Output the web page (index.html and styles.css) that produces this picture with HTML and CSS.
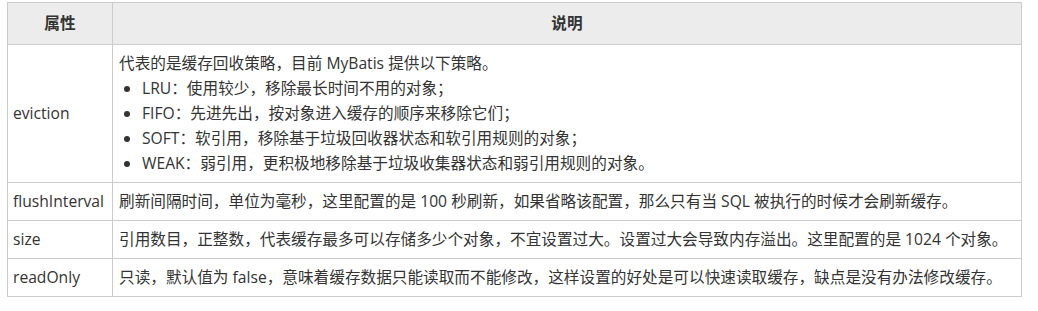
FILE: index.html
```html
<!DOCTYPE html>
<html lang="zh-CN">
<head>
<meta charset="utf-8">
<title>cache</title>
<link rel="stylesheet" href="styles.css">
</head>
<body>
<div class="wrap">
<table class="attr-table">
  <colgroup>
    <col class="col-name">
    <col class="col-desc">
  </colgroup>
  <thead>
    <tr><th>属性</th><th>说明</th></tr>
  </thead>
  <tbody>
    <tr>
      <td class="name">eviction</td>
      <td>
        <div>代表的是缓存回收策略，目前 MyBatis 提供以下策略。</div>
        <ul class="list">
          <li>LRU：使用较少，移除最长时间不用的对象；</li>
          <li>FIFO：先进先出，按对象进入缓存的顺序来移除它们；</li>
          <li>SOFT：软引用，移除基于垃圾回收器状态和软引用规则的对象；</li>
          <li>WEAK：弱引用，更积极地移除基于垃圾收集器状态和弱引用规则的对象。</li>
        </ul>
      </td>
    </tr>
    <tr>
      <td class="name">flushInterval</td>
      <td>刷新间隔时间，单位为毫秒，这里配置的是 100 秒刷新，如果省略该配置，那么只有当 SQL 被执行的时候才会刷新缓存。</td>
    </tr>
    <tr>
      <td class="name">size</td>
      <td>引用数目，正整数，代表缓存最多可以存储多少个对象，不宜设置过大。设置过大会导致内存溢出。这里配置的是 1024 个对象。</td>
    </tr>
    <tr>
      <td class="name">readOnly</td>
      <td>只读，默认值为 false，意味着缓存数据只能读取而不能修改，这样设置的好处是可以快速读取缓存，缺点是没有办法修改缓存。</td>
    </tr>
  </tbody>
</table>
</div>
</body>
</html>
```

FILE: styles.css
```css
html, body {
  margin: 0;
  padding: 0;
  background: #fff;
}
.wrap {
  padding: 2px 0 0 7px;
}
.attr-table {
  border-collapse: collapse;
  table-layout: fixed;
  width: 1015px;
  font-family: "Open Sans", "Noto Sans CJK SC", sans-serif;
  font-size: 15.65px;
  line-height: 25px;
  color: #333;
}
.col-name { width: 105px; }
.attr-table th,
.attr-table td {
  border: 1px solid #ccc;
  padding: 6px 5px;
  text-align: left;
  vertical-align: middle;
}
.attr-table th {
  background: #ececec;
  font-weight: bold;
  text-align: center;
  padding: 8px 5px;
}
.attr-table td + td {
  padding: 6px 2px 6px 6px;
}
.list {
  margin: 0;
  padding-left: 23px;
}
```
